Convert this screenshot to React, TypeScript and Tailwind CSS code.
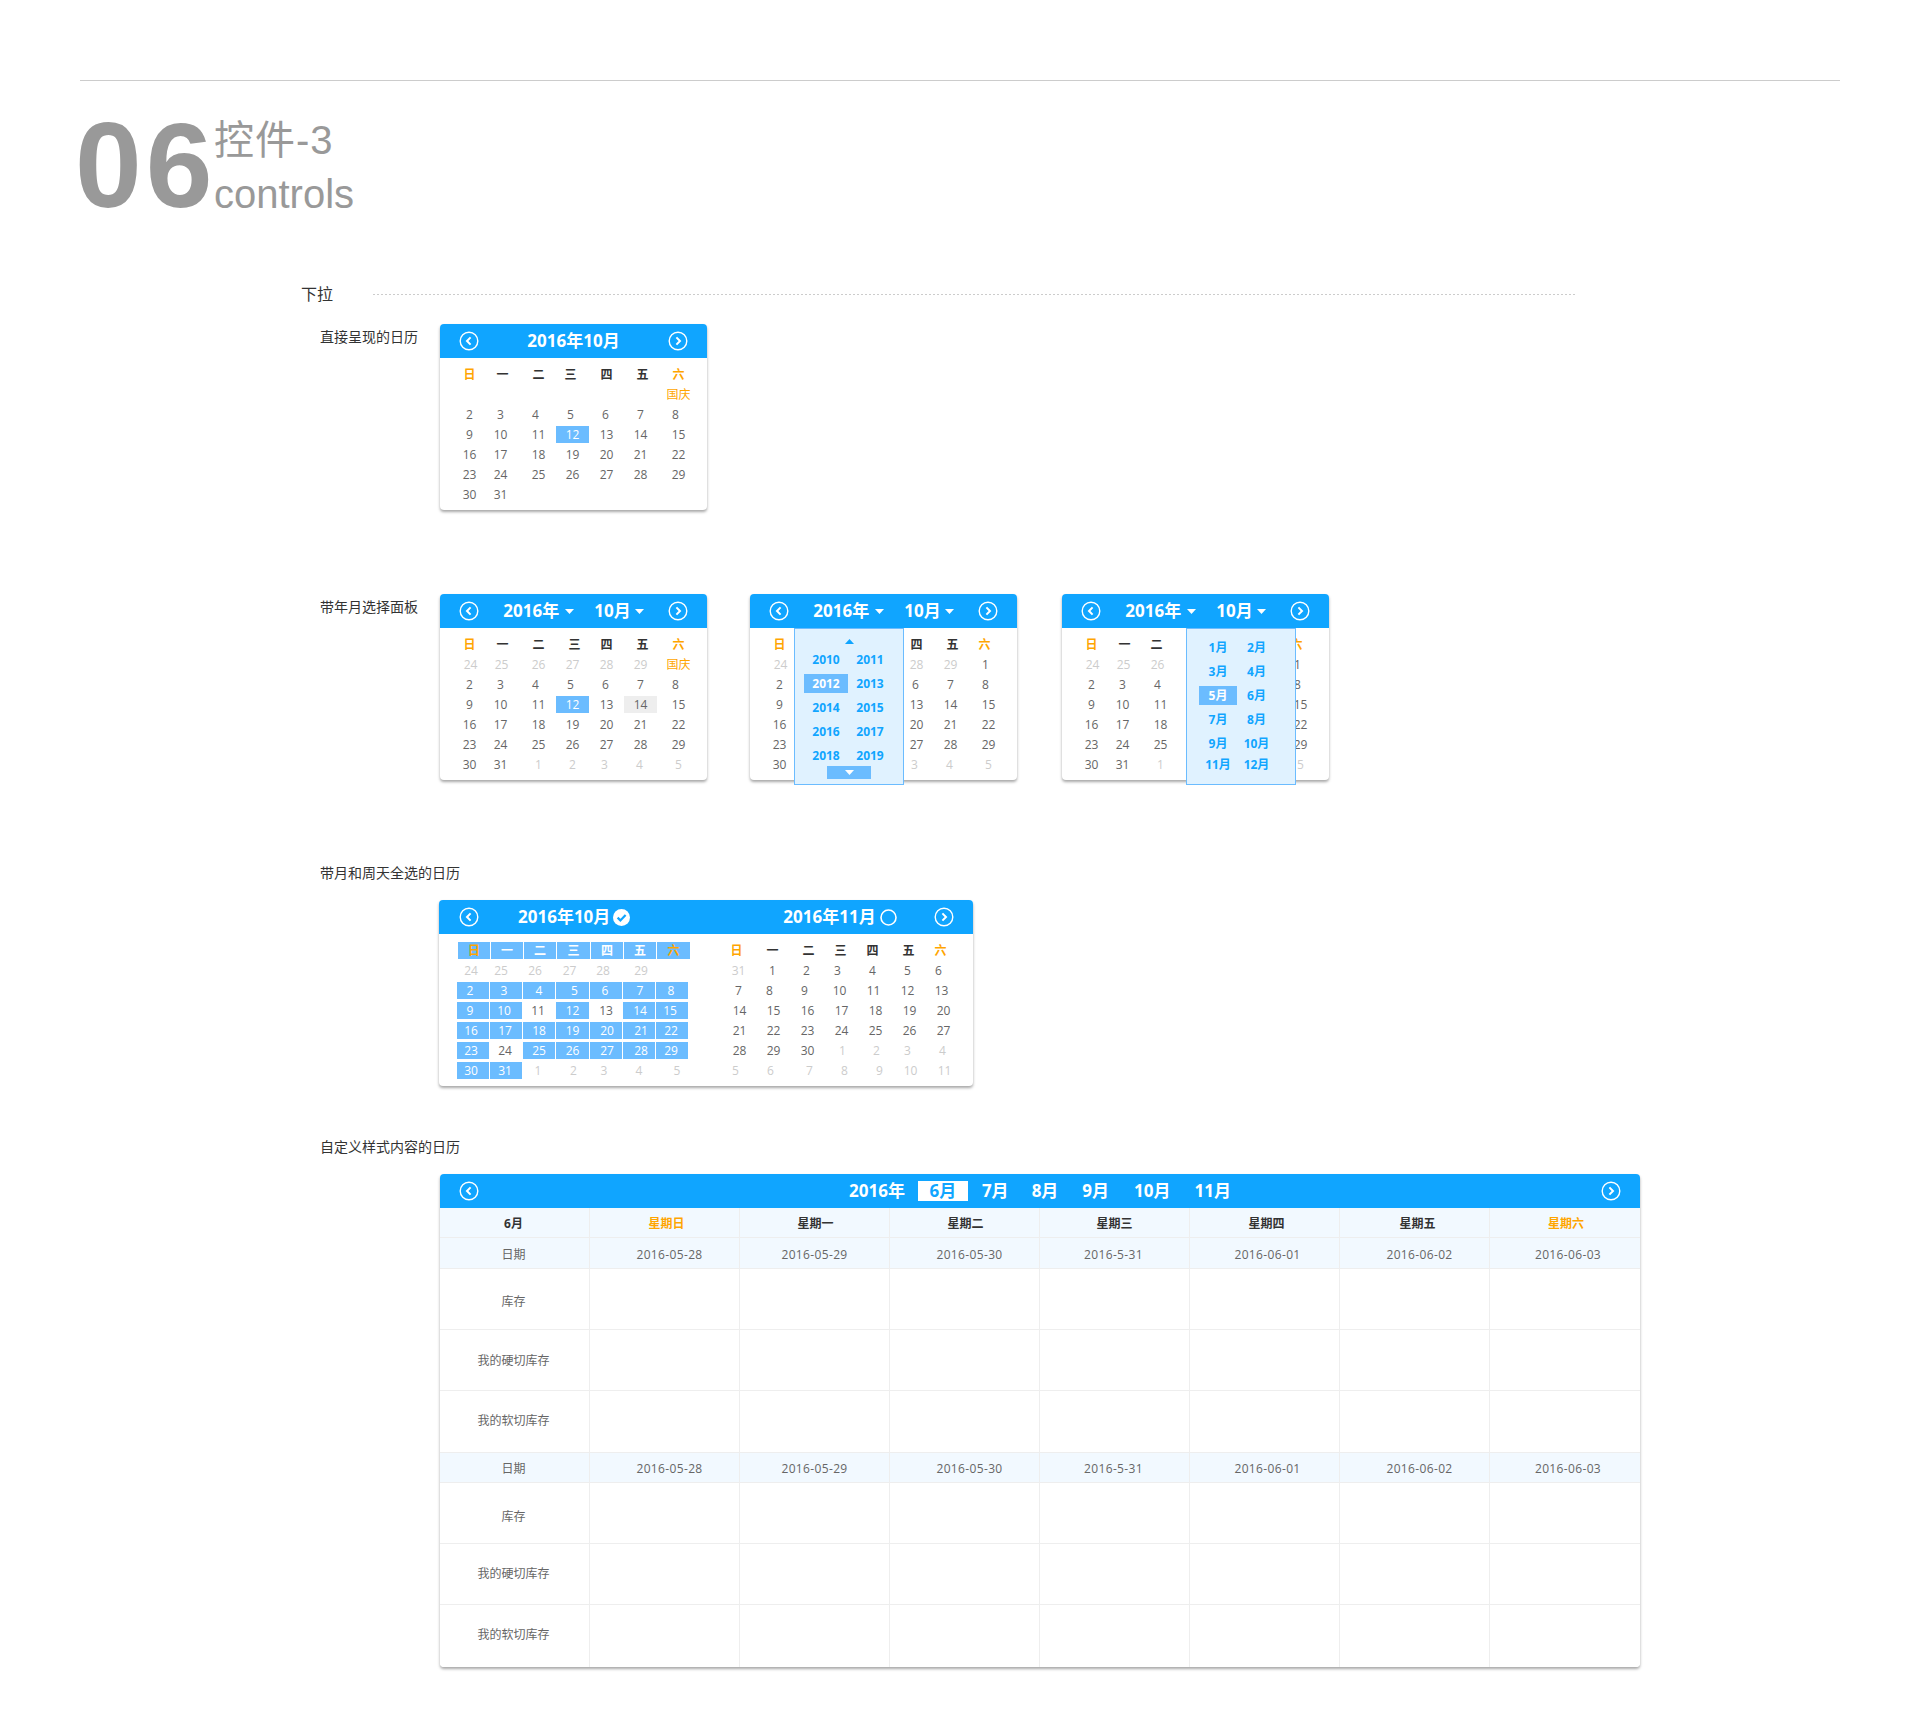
import React from "react";

const sx: Record<number, string> = {
  [-5]: "-translate-x-[5px]",
  [-4]: "-translate-x-[4px]",
  [-3]: "-translate-x-[3px]",
  [-2]: "-translate-x-[2px]",
  [-1]: "-translate-x-[1px]",
  0: "",
  1: "translate-x-[1px]",
  2: "translate-x-[2px]",
  3: "translate-x-[3px]",
  4: "translate-x-[4px]",
  5: "translate-x-[5px]",
};

function Circle({ dir }: { dir: "l" | "r" }) {
  return (
    <svg width="20" height="20" viewBox="0 0 20 20" fill="none" className="shrink-0">
      <circle cx="10" cy="10" r="8.8" stroke="#fff" strokeWidth="1.4" />
      <path
        d={dir === "l" ? "M11.6 6.4 8 10l3.6 3.6" : "M8.4 6.4 12 10l-3.6 3.6"}
        stroke="#fff"
        strokeWidth="2"
      />
    </svg>
  );
}

function Caret({ up, color = "#fff" }: { up?: boolean; color?: string }) {
  return (
    <svg width="9" height="5" viewBox="0 0 9 5" className="shrink-0">
      <path d={up ? "M0 5 4.5 0 9 5Z" : "M0 0h9L4.5 5Z"} fill={color} />
    </svg>
  );
}

type Row = { c: string[]; d?: number[] };

// cell prefix: ~ muted, * selected, # hovered, ! orange, ^ head dark, % head orange
function Cell({ v, dx = 0 }: { v: string; dx?: number }) {
  const k = v[0];
  const t = k && "~*#!^%".includes(k) ? v.slice(1) : v;
  let cls = "text-[#666]";
  if (k === "~") cls = "text-[#ccc]";
  if (k === "!") cls = "text-[#ffa500]";
  if (k === "^") cls = "font-bold text-[#333]";
  if (k === "%") cls = "font-bold text-[#ffa500]";
  let bg = "";
  if (k === "*") {
    bg = "bg-[#6bbcff]";
    cls = "text-white";
  }
  if (k === "#") bg = "bg-[#eeeeee]";
  return (
    <div className={`h-[17px] text-center text-xs leading-[17px] ${bg}`}>
      <span className={`inline-block ${sx[dx]} ${cls}`}>{t}</span>
    </div>
  );
}

function Grid({ rows }: { rows: Row[] }) {
  return (
    <div className="flex flex-col gap-y-[3px]">
      {rows.map((r, i) => (
        <div key={i} className="grid h-[17px] grid-cols-[repeat(7,33px)] gap-x-[1px]">
          {r.c.map((v, j) => (
            <Cell key={j} v={v} dx={r.d ? r.d[j] : 0} />
          ))}
        </div>
      ))}
    </div>
  );
}

const base = [-1, -4, 0, 0, 0, 0, 4];
const first = [-1, -4, -3, -2, -1, 0, 1];
const s = (x: string) => x.split(" ");

const head1: Row = { c: s("%日 ^一 ^二 ^三 ^四 ^五 %六"), d: [-1, -2, 0, -2, 0, 2, 4] };
const head2: Row = { c: s("%日 ^一 ^二 ^三 ^四 ^五 %六"), d: [-1, -2, 0, 2, 0, 2, 4] };
const midRows: Row[] = [
  { c: s("2 3 4 5 6 7 8"), d: first },
  { c: s("9 10 11 *12 13 14 15"), d: base },
  { c: s("16 17 18 19 20 21 22"), d: base },
  { c: s("23 24 25 26 27 28 29"), d: base },
];
const midRows2: Row[] = [
  midRows[0],
  { c: s("9 10 11 *12 13 #14 15"), d: base },
  midRows[2],
  midRows[3],
];
const calA: Row[] = [
  head1,
  { c: ["", "", "", "", "", "", "!国庆"], d: base },
  ...midRows,
  { c: ["30", "31", "", "", "", "", ""], d: base },
];
const calB: Row[] = [
  head2,
  { c: s("~24 ~25 ~26 ~27 ~28 ~29 !国庆"), d: [0, -3, 0, 0, 0, 0, 4] },
  ...midRows2,
  { c: s("30 31 ~1 ~2 ~3 ~4 ~5"), d: [-1, -4, 0, 0, -2, -1, 4] },
];
const plain: Row[] = [
  { c: s("%日 ^一 ^二 ^三 ^四 ^五 %六"), d: [-1, -2, -4, 2, 0, 2, 0] },
  { c: s("~24 ~25 ~26 ~27 ~28 ~29 1"), d: [0, -3, -3, 0, 0, 0, 1] },
  { c: s("2 3 4 5 6 7 8"), d: [-1, -4, -3, -2, -1, 0, 1] },
  { c: s("9 10 11 12 13 14 15"), d: base },
  midRows[2],
  midRows[3],
  { c: s("30 31 ~1 ~2 ~3 ~4 ~5"), d: [-1, -4, 0, 0, -2, -1, 4] },
];
// cells that lie entirely under an open panel are left out
const hide = (cols: number[]): Row[] =>
  plain.map((r) => ({ c: r.c.map((v, i) => (cols.includes(i) ? "" : v)), d: r.d }));

function Card({ children, w = "w-[267px]" }: { children: React.ReactNode; w?: string }) {
  return (
    <div className={`relative shrink-0 rounded-[4px] bg-white shadow-[0_2px_3px_rgba(0,0,0,0.35)] ${w}`}>
      {children}
    </div>
  );
}

function YearMonthBar() {
  return (
    <div className="flex h-[34px] items-center justify-between rounded-t-[4px] bg-[#10a5ff] px-[19px]">
      <Circle dir="l" />
      <div className="flex items-center text-[17px] font-bold text-white">
        <span>2016年</span>
        <span className="ml-[6px]">
          <Caret />
        </span>
        <span className="ml-[20px]">10月</span>
        <span className="ml-[4px]">
          <Caret />
        </span>
      </div>
      <Circle dir="r" />
    </div>
  );
}

function Body({ rows }: { rows: Row[] }) {
  return (
    <div className="px-[14px] pb-[7px] pt-[8px]">
      <Grid rows={rows} />
    </div>
  );
}

const years = [
  ["2010", "2011"],
  ["2012", "2013"],
  ["2014", "2015"],
  ["2016", "2017"],
  ["2018", "2019"],
];

function YearPopup() {
  return (
    <div className="absolute left-[44px] top-[34px] h-[157px] w-[110px] border border-[#6bbcff] bg-[#e0f2ff]">
      <div className="flex justify-center pt-[10px]">
        <Caret up color="#10a5ff" />
      </div>
      <div className="mt-[6px] flex flex-col gap-y-[5px] pl-[9px]">
        {years.map((r) => (
          <div key={r[0]} className="grid h-[19px] grid-cols-[44px_44px]">
            {r.map((y) => (
              <div
                key={y}
                className={`text-center text-xs font-bold leading-[19px] ${
                  y === "2012" ? "bg-[#6bbcff] text-white" : "text-[#10a5ff]"
                }`}
              >
                {y}
              </div>
            ))}
          </div>
        ))}
      </div>
      <div className="mx-auto mt-[1px] flex h-[13px] w-[44px] items-center justify-center bg-[#6bbcff]">
        <Caret />
      </div>
    </div>
  );
}

const months = [
  ["1月", "2月"],
  ["3月", "4月"],
  ["5月", "6月"],
  ["7月", "8月"],
  ["9月", "10月"],
  ["11月", "12月"],
];

function MonthPopup() {
  return (
    <div className="absolute left-[124px] top-[34px] h-[157px] w-[110px] border border-[#6bbcff] bg-[#e0f2ff]">
      <div className="flex flex-col gap-y-[5px] pl-[12px] pt-[9px]">
        {months.map((r, i) => (
          <div key={r[0]} className={`grid h-[19px] grid-cols-[38px_39px] ${i === 5 ? "-mt-[3px]" : ""}`}>
            {r.map((y) => (
              <div
                key={y}
                className={`text-center text-xs font-bold leading-[19px] ${
                  y === "5月" ? "bg-[#6bbcff] text-white" : "text-[#10a5ff]"
                }`}
              >
                {y}
              </div>
            ))}
          </div>
        ))}
      </div>
    </div>
  );
}

function LeftMonth() {
  const rows: { c: string[]; d: number[] }[] = [
    { c: s("~24 ~25 ~26 ~27 ~28 ~29"), d: [-2, -5, -4, -3, -3, 2] },
    { c: s("*2 *3 *4 *5 *6 *7 *8"), d: [-3, -2, 0, 2, -1, 1, -1] },
    { c: s("*9 *10 11 *12 13 *14 *15"), d: [-3, -2, -1, 0, 0, 1, -2] },
    { c: s("*16 *17 *18 *19 *20 *21 *22"), d: [-2, -1, 0, 0, 1, 2, -1] },
    { c: s("*23 24 *25 *26 *27 *28 *29"), d: [-2, -1, 0, 0, 1, 2, -1] },
    { c: s("*30 *31 ~1 ~2 ~3 ~4 ~5"), d: [-2, -1, -1, 1, -2, 0, 5] },
  ];
  const heads = ["日", "一", "二", "三", "四", "五", "六"];
  return (
    <div className="w-[233px] shrink-0">
      <div className="ml-[1px] grid h-[17px] grid-cols-[32px_32px_32px_33px_32px_32px_33px] gap-x-[1px]">
        {heads.map((h, i) => (
          <div
            key={h}
            className={`bg-[#6bbcff] text-center text-xs font-bold leading-[17px] ${
              i === 0 || i === 6 ? "text-[#ffa500]" : "text-white"
            }`}
          >
            {h}
          </div>
        ))}
      </div>
      <div className="mt-[3px] flex flex-col gap-y-[3px]">
        {rows.map((r, i) => (
          <div key={i} className="grid h-[17px] grid-cols-[32px_32px_32px_33px_32px_32px_32px] gap-x-[1px]">
            {r.c.map((v, j) => (
              <Cell key={j} v={v} dx={r.d[j]} />
            ))}
          </div>
        ))}
      </div>
    </div>
  );
}

const rightRows: Row[] = [
  { c: s("%日 ^一 ^二 ^三 ^四 ^五 %六"), d: [-3, -1, 1, -1, -3, -1, -3] },
  { c: s("~31 1 2 3 4 5 6"), d: [-1, -1, -1, -4, -3, -2, -5] },
  { c: s("7 8 9 10 11 12 13"), d: [-1, -4, -3, -2, -2, -2, -2] },
  { c: s("14 15 16 17 18 19 20") },
  { c: s("21 22 23 24 25 26 27") },
  { c: s("28 29 30 ~1 ~2 ~3 ~4"), d: [0, 0, 0, 1, 1, -2, -1] },
  { c: s("~5 ~6 ~7 ~8 ~9 ~10 ~11"), d: [-4, -3, 2, 3, 4, 1, 1] },
];

function DoubleCal() {
  return (
    <Card w="w-[534px]">
      <div className="flex h-[34px] items-center rounded-t-[4px] bg-[#10a5ff] pl-[20px] pr-[19px] text-[17px] font-bold text-white">
        <Circle dir="l" />
        <span className="ml-[39px]">2016年10月</span>
        <svg width="17" height="17" viewBox="0 0 17 17" className="ml-[3px] shrink-0">
          <circle cx="8.5" cy="8.5" r="8.5" fill="#fff" />
          <path d="M4.6 8.6 7.4 11.4 12.6 6" fill="none" stroke="#10a5ff" strokeWidth="2.2" />
        </svg>
        <span className="ml-[153px]">2016年11月</span>
        <svg width="17" height="17" viewBox="0 0 17 17" className="ml-[4px] shrink-0">
          <circle cx="8.5" cy="8.5" r="7.5" fill="none" stroke="#fff" strokeWidth="1.6" />
        </svg>
        <span className="ml-auto">
          <Circle dir="r" />
        </span>
      </div>
      <div className="flex pb-[7px] pl-[18px] pt-[8px]">
        <LeftMonth />
        <div className="ml-[33px]">
          <Grid rows={rightRows} />
        </div>
      </div>
    </Card>
  );
}

const dayHead = ["星期日", "星期一", "星期二", "星期三", "星期四", "星期五", "星期六"];
const dayShift = [2, 1, 1, 0, 2, 3, 1];
const dates = ["2016-05-28", "2016-05-29", "2016-05-30", "2016-5-31", "2016-06-01", "2016-06-02", "2016-06-03"];
const dateShift = [5, 0, 5, -1, 3, 5, 3];

function TRow({
  h,
  tint,
  last,
  first,
  cells,
  shift,
  headRow,
  dy = "",
}: {
  h: string;
  tint?: boolean;
  last?: boolean;
  first: string;
  cells?: string[];
  shift?: number[];
  headRow?: boolean;
  dy?: string;
}) {
  const all = [first, ...(cells ?? ["", "", "", "", "", "", ""])];
  return (
    <div
      className={`grid grid-cols-8 ${h} ${tint ? "bg-[#f2f9ff]" : "bg-white"} ${
        last ? "rounded-b-[4px]" : "border-b border-[#eeeeee]"
      }`}
    >
      {all.map((t, i) => (
        <div
          key={i}
          className={`flex items-center justify-center text-xs ${i < 7 ? "border-r border-[#eeeeee]" : ""} ${
            headRow ? (i === 1 || i === 7 ? "font-bold text-[#ffa500]" : "font-bold text-[#333]") : "text-[#666]"
          }`}
        >
          <span
            className={`${dy} ${i > 0 && shift ? sx[shift[i - 1]] : "-translate-x-[1px]"} ${
              i > 0 && !headRow ? "tracking-[0.35px]" : ""
            }`}
          >
            {t}
          </span>
        </div>
      ))}
    </div>
  );
}

function BigCal() {
  return (
    <Card w="w-[1200px]">
      <div className="flex h-[34px] items-center justify-between rounded-t-[4px] bg-[#10a5ff] px-[19px] text-[17px] font-bold text-white">
        <Circle dir="l" />
        <div className="flex items-center">
          <span>2016年</span>
          <span className="ml-[13px] h-[20px] w-[50px] bg-white text-center leading-[20px] text-[#10a5ff]">6月</span>
          <span className="ml-[14px]">7月</span>
          <span className="ml-[23px]">8月</span>
          <span className="ml-[24px]">9月</span>
          <span className="ml-[25px]">10月</span>
          <span className="ml-[24px]">11月</span>
        </div>
        <Circle dir="r" />
      </div>
      <TRow h="h-[30px]" tint headRow first="6月" cells={dayHead} shift={dayShift} dy="translate-y-[1px]" />
      <TRow h="h-[31px]" tint first="日期" cells={dates} shift={dateShift} dy="translate-y-[2px]" />
      <TRow h="h-[61px]" first="库存" dy="translate-y-[3px]" />
      <TRow h="h-[61px]" first="我的硬切库存" dy="translate-y-[1px]" />
      <TRow h="h-[62px]" first="我的软切库存" dy="-translate-y-[1px]" />
      <TRow h="h-[30px]" tint first="日期" cells={dates} shift={dateShift} dy="translate-y-[1px]" />
      <TRow h="h-[61px]" first="库存" dy="translate-y-[4px]" />
      <TRow h="h-[61px]" first="我的硬切库存" />
      <TRow h="h-[62px]" last first="我的软切库存" dy="-translate-y-[1px]" />
    </Card>
  );
}

export default function App() {
  return (
    <div className="h-[1714px] w-[1920px] bg-white pt-[80px] font-['Open_Sans','Noto_Sans_CJK_SC',sans-serif] text-[#333]">
      <div className="ml-[80px] h-px w-[1760px] bg-[#cccccc]" />

      <div className="ml-[75px] mt-[24px] flex h-[120px] text-[#999] font-['Liberation_Sans','Noto_Sans_CJK_SC',sans-serif]">
        <div className="w-[139px] text-[120px] font-bold leading-[120px] tracking-[4px]">06</div>
        <div className="text-[40px]">
          <div className="mt-[8px] h-[54px] leading-[54px] tracking-[1px]">控件-3</div>
          <div className="h-[54px] leading-[54px]">controls</div>
        </div>
      </div>

      <div className="ml-[301px] mt-[58px] flex h-[22px] items-center">
        <span className="text-base leading-[22px] text-[#333]">下拉</span>
        <div className="ml-[40px] h-px w-[1202px] bg-[repeating-linear-gradient(90deg,#cccccc_0,#cccccc_2px,transparent_2px,transparent_4px)]" />
      </div>

      <div className="ml-[320px] mt-[19px] flex">
        <div className="w-[120px] text-sm leading-[25px] text-[#333]">直接呈现的日历</div>
        <Card>
          <div className="flex h-[34px] items-center justify-between rounded-t-[4px] bg-[#10a5ff] px-[19px] text-[17px] font-bold text-white">
            <Circle dir="l" />
            <span>2016年10月</span>
            <Circle dir="r" />
          </div>
          <Body rows={calA} />
        </Card>
      </div>

      <div className="ml-[320px] mt-[84px] flex">
        <div className="w-[120px] text-sm leading-[25px] text-[#333]">带年月选择面板</div>
        <Card>
          <YearMonthBar />
          <Body rows={calB} />
        </Card>
        <div className="ml-[43px]">
          <Card>
            <YearMonthBar />
            <Body rows={hide([1, 2, 3])} />
            <YearPopup />
          </Card>
        </div>
        <div className="ml-[45px]">
          <Card>
            <YearMonthBar />
            <Body rows={hide([3, 4, 5])} />
            <MonthPopup />
          </Card>
        </div>
      </div>

      <div className="ml-[320px] mt-[82px]">
        <div className="text-sm leading-[22px] text-[#333]">带月和周天全选的日历</div>
        <div className="ml-[119px] mt-[16px]">
          <DoubleCal />
        </div>
      </div>

      <div className="ml-[320px] mt-[50px]">
        <div className="text-sm leading-[22px] text-[#333]">自定义样式内容的日历</div>
        <div className="ml-[120px] mt-[16px]">
          <BigCal />
        </div>
      </div>
    </div>
  );
}
